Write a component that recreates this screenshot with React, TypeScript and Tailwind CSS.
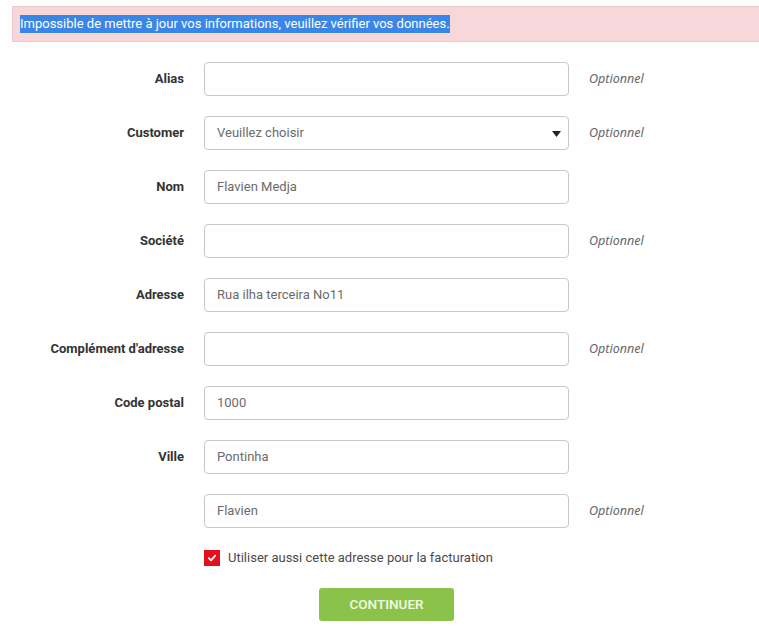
import React from 'react';

interface Field {
  label: string;
  value?: string;
  optional?: boolean;
  select?: boolean;
}

const FIELDS: Field[] = [
  { label: 'Alias', optional: true },
  { label: 'Customer', value: 'Veuillez choisir', optional: true, select: true },
  { label: 'Nom', value: 'Flavien Medja' },
  { label: 'Société', optional: true },
  { label: 'Adresse', value: 'Rua ilha terceira No11' },
  { label: "Complément d'adresse", optional: true },
  { label: 'Code postal', value: '1000' },
  { label: 'Ville', value: 'Pontinha' },
  { label: '', value: 'Flavien', optional: true },
];

const App: React.FC = () => {
  return (
    <div className="min-h-[637px] w-[759px] overflow-hidden bg-white pt-[6px] font-['Roboto',sans-serif]">
      <div className="ml-[12px] mr-[-10px] flex h-[36px] items-center border border-[#ebc8cc] bg-[#f8d7da] pl-[7px]">
        <span className="bg-[#3a86e6] text-[13px] leading-[18px] text-white">
          Impossible de mettre à jour vos informations, veuillez vérifier vos données.
        </span>
      </div>

      <div className="mt-[20px] grid grid-cols-[184px_365px_auto] gap-x-[20px] gap-y-[20px]">
        {FIELDS.map((f, i) => (
          <React.Fragment key={i}>
            <div className="flex h-[34px] items-center justify-end text-[13px] font-bold text-[#333]">
              {f.label}
            </div>
            <div className="relative flex h-[34px] items-center rounded-[4px] border border-[#c8c8c8] bg-white pl-[12px] text-[13px] text-[#6b6b6b]">
              {f.value}
              {f.select && (
                <svg className="absolute right-[7px] top-[14px] h-[6px] w-[9px]" viewBox="0 0 9 6">
                  <path d="M0 0h9L4.5 6z" fill="#222" />
                </svg>
              )}
            </div>
            <div className="flex h-[34px] items-center text-[12.5px] italic text-[#666] font-['Noto_Sans',sans-serif]">
              {f.optional ? 'Optionnel' : ''}
            </div>
          </React.Fragment>
        ))}
      </div>

      <div className="ml-[204px] mt-[20px] flex items-center gap-[8px]">
        <span className="flex h-[16px] w-[16px] items-center justify-center bg-[#e2111d]">
          <svg className="h-[10px] w-[10px]" viewBox="0 0 10 10">
            <path d="M1.8 5.2l2.2 2.1 4.2-4.6" fill="none" stroke="#fff" strokeWidth="1.8" strokeLinecap="round" strokeLinejoin="round" />
          </svg>
        </span>
        <span className="text-[13px] text-[#4a4a4a]">Utiliser aussi cette adresse pour la facturation</span>
      </div>

      <div className="ml-[319px] mt-[20px]">
        <button className="h-[33px] w-[135px] rounded-[3px] bg-[#8bc34a] text-[13.5px] font-medium text-[#f2fbe3]">
          CONTINUER
        </button>
      </div>
    </div>
  );
};

export default App;
